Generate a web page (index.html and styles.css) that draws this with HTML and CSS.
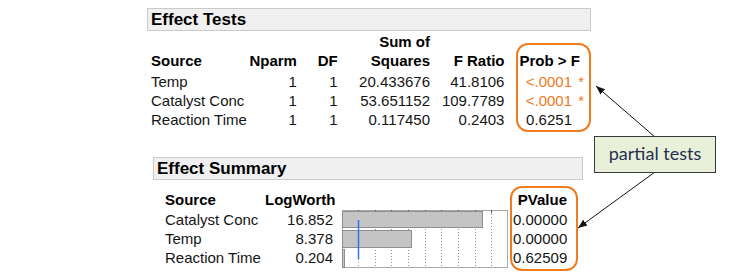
FILE: index.html
```html
<!DOCTYPE html>
<html lang="en">
<head>
    <meta charset="UTF-8">
    <title>Effect Tests</title>
    <link rel="stylesheet" href="styles.css">
</head>
<body>
    <div class="report">
        <!-- Effect Tests outline -->
        <section class="outline tests">
            <div class="outline-title">Effect Tests</div>
            <div class="cols">
                <div class="col src">
                    <div class="hd">Source</div>
                    <div>Temp</div>
                    <div>Catalyst Conc</div>
                    <div>Reaction Time</div>
                </div>
                <div class="col num nparm">
                    <div class="hd">Nparm</div>
                    <div>1</div>
                    <div>1</div>
                    <div>1</div>
                </div>
                <div class="col num df">
                    <div class="hd">DF</div>
                    <div>1</div>
                    <div>1</div>
                    <div>1</div>
                </div>
                <div class="col num ss">
                    <div class="hd"><span>Sum of</span><span>Squares</span></div>
                    <div>20.433676</div>
                    <div>53.651152</div>
                    <div>0.117450</div>
                </div>
                <div class="col num fratio">
                    <div class="hd">F Ratio</div>
                    <div>41.8106</div>
                    <div>109.7789</div>
                    <div>0.2403</div>
                </div>
                <div class="col num prob highlight">
                    <div class="hd">Prob &gt; F</div>
                    <div class="sig">&lt;.0001<span class="star">*</span></div>
                    <div class="sig">&lt;.0001<span class="star">*</span></div>
                    <div>0.6251<span class="star"></span></div>
                </div>
            </div>
        </section>

        <!-- Effect Summary outline -->
        <section class="outline summary">
            <div class="outline-title">Effect Summary</div>
            <div class="cols">
                <div class="col src">
                    <div class="hd">Source</div>
                    <div>Catalyst Conc</div>
                    <div>Temp</div>
                    <div>Reaction Time</div>
                </div>
                <div class="col num logworth">
                    <div class="hd">LogWorth</div>
                    <div>16.852</div>
                    <div>8.378</div>
                    <div>0.204</div>
                </div>
                <div class="col chart">
                    <div class="hd"></div>
                    <svg class="bars" width="166" height="58" viewBox="0 0 166 58">
                        <rect x="0.5" y="0.5" width="165" height="57" fill="#fff" stroke="#a8a8a8"/>
                        <g stroke="#8a8a8a" stroke-width="1" stroke-dasharray="1 2">
                            <line x1="16.5" y1="1" x2="16.5" y2="57"/>
                            <line x1="33.5" y1="1" x2="33.5" y2="57"/>
                            <line x1="49.5" y1="1" x2="49.5" y2="57"/>
                            <line x1="66.5" y1="1" x2="66.5" y2="57"/>
                            <line x1="83.5" y1="1" x2="83.5" y2="57"/>
                            <line x1="99.5" y1="1" x2="99.5" y2="57"/>
                            <line x1="116.5" y1="1" x2="116.5" y2="57"/>
                            <line x1="133.5" y1="1" x2="133.5" y2="57"/>
                            <line x1="149.5" y1="1" x2="149.5" y2="57"/>
                        </g>
                        <g stroke="#555" stroke-width="1">
                            <line x1="16.5" y1="0" x2="16.5" y2="3"/>
                            <line x1="33.5" y1="0" x2="33.5" y2="3"/>
                            <line x1="49.5" y1="0" x2="49.5" y2="3"/>
                            <line x1="66.5" y1="0" x2="66.5" y2="3"/>
                            <line x1="83.5" y1="0" x2="83.5" y2="3"/>
                            <line x1="99.5" y1="0" x2="99.5" y2="3"/>
                            <line x1="116.5" y1="0" x2="116.5" y2="3"/>
                            <line x1="133.5" y1="0" x2="133.5" y2="3"/>
                            <line x1="149.5" y1="0" x2="149.5" y2="3"/>
                        </g>
                        <g fill="#c4c4c4" stroke="#8e8e8e" stroke-width="1">
                            <rect x="0.5" y="1.5" width="140" height="16"/>
                            <rect x="0.5" y="20.5" width="69" height="17"/>
                            <rect x="0.5" y="39.5" width="2" height="18"/>
                        </g>
                        <line x1="16.5" y1="10" x2="16.5" y2="49" stroke="#3b6ff2" stroke-width="1.5"/>
                    </svg>
                </div>
                <div class="col num pvalue highlight">
                    <div class="hd">PValue</div>
                    <div>0.00000</div>
                    <div>0.00000</div>
                    <div>0.62509</div>
                </div>
            </div>
        </section>
    </div>

    <!-- annotation -->
    <svg class="arrows" width="750" height="280" viewBox="0 0 750 280">
        <defs>
            <marker id="head" viewBox="0 0 10 10" refX="10" refY="5" markerWidth="9" markerHeight="9" orient="auto">
                <path d="M0,1 L10,5 L0,9 z" fill="#111"/>
            </marker>
        </defs>
        <line x1="655" y1="137" x2="596" y2="86" stroke="#111" stroke-width="1" marker-end="url(#head)"/>
        <line x1="655" y1="172" x2="578" y2="228" stroke="#111" stroke-width="1" marker-end="url(#head)"/>
    </svg>
    <div class="callout">partial tests</div>
</body>
</html>
```
FILE: styles.css
```css
body {
    margin: 0;
    background: #fff;
    font-family: 'Liberation Sans', Arial, sans-serif;
    font-size: 15px;
    color: #151515;
}
.report {
    display: flex;
    flex-direction: column;
    align-items: flex-start;
}
.outline-title {
    height: 21px;
    line-height: 21px;
    border: 1px solid #cacaca;
    background: #f0f0f0;
    font-size: 17px;
    font-weight: bold;
    padding-left: 3px;
    color: #000;
}
.tests {
    margin: 8px 0 0 147px;
    width: 444px;
}
.summary {
    margin: 25px 0 0 153px;
    width: 430px;
}
.cols {
    display: flex;
    align-items: flex-start;
}
.col div {
    line-height: 19px;
    height: 19px;
    white-space: nowrap;
}
.col .hd {
    font-weight: bold;
    color: #000;
}
.num {
    text-align: right;
}

/* Effect Tests columns */
.tests .cols {
    margin: 1px 0 0 4px;
}
.tests .col .hd {
    height: 38px;
    padding-bottom: 2px;
    display: flex;
    flex-direction: column;
    justify-content: flex-end;
    align-items: flex-end;
}
.tests .src .hd {
    align-items: flex-start;
}
.tests .src { width: 99px; }
.tests .nparm { width: 48px; }
.tests .df { width: 41px; }
.tests .ss { width: 93px; }
.tests .fratio { width: 75px; }

.highlight {
    box-sizing: border-box;
    border: 2px solid #f07b21;
    border-radius: 12px;
}
.tests .prob {
    width: 75px;
    margin: 11px 0 0 12px;
    padding: 6px 5px 1px 1px;
}
.tests .prob .hd {
    height: 19px;
    display: block;
    text-align: left;
}
.sig {
    color: #ee7a22;
}
.star {
    display: inline-block;
    width: 12px;
    text-align: right;
    vertical-align: top;
}

/* Effect Summary columns */
.summary .cols {
    margin: 6px 0 0 12px;
}
.summary .col {
    margin-top: 4px;
}
.summary .col .hd {
    padding-bottom: 1px;
}
.summary .src { width: 100px; }
.summary .logworth { width: 68px; }
.summary .chart {
    width: 166px;
    margin-left: 9px;
}
.bars {
    display: block;
}
.summary .pvalue {
    width: 68px;
    margin: 0 0 0 2px;
    padding: 2px 9px 2px 1px;
}

/* annotation */
.arrows {
    position: absolute;
    top: 0;
    left: 0;
    pointer-events: none;
}
.callout {
    position: absolute;
    left: 594px;
    top: 136px;
    width: 122px;
    height: 37px;
    box-sizing: border-box;
    border: 1.5px solid #3a3a3a;
    background: #e9f0da;
    font-family: Lato, 'Noto Sans', sans-serif;
    font-size: 18px;
    line-height: 33px;
    text-align: center;
    color: #26304e;
}
```
